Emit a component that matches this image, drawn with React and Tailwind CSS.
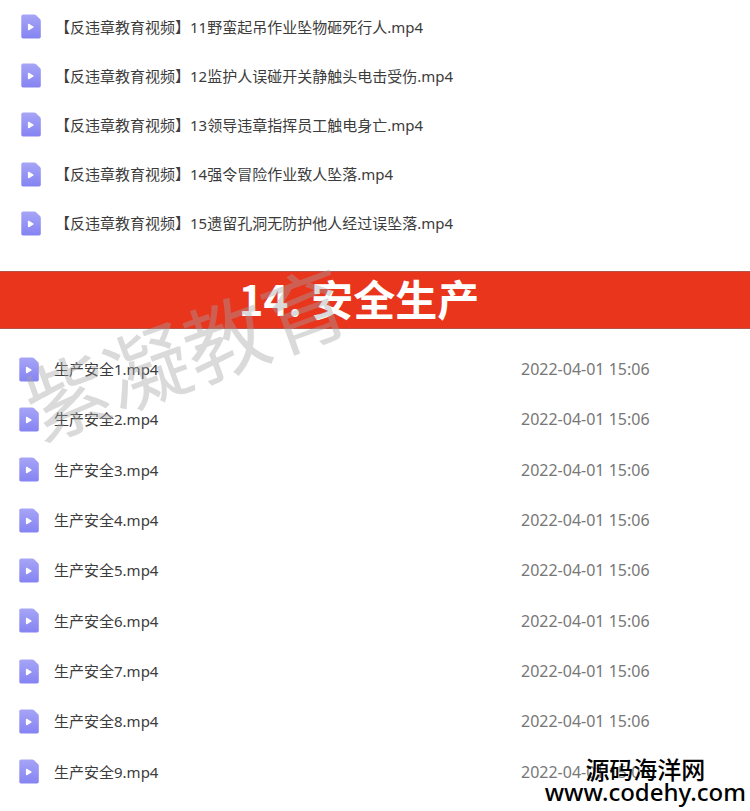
const trainingVideos = [
  '【反违章教育视频】11野蛮起吊作业坠物砸死行人.mp4',
  '【反违章教育视频】12监护人误碰开关静触头电击受伤.mp4',
  '【反违章教育视频】13领导违章指挥员工触电身亡.mp4',
  '【反违章教育视频】14强令冒险作业致人坠落.mp4',
  '【反违章教育视频】15遗留孔洞无防护他人经过误坠落.mp4',
]

const safetyVideos = [1, 2, 3, 4, 5, 6, 7, 8, 9].map((n) => ({
  name: `生产安全${n}.mp4`,
  date: '2022-04-01 15:06',
}))

// Purple file with a cut corner and a play triangle
function VideoIcon() {
  return (
    <svg
      className="h-[25px] w-5 shrink-0"
      viewBox="0 0 20 25"
      aria-hidden="true"
    >
      <defs>
        <linearGradient id="file-fill" x1="0" y1="0" x2="0" y2="1">
          <stop offset="0" stopColor="#a6a5f6" />
          <stop offset="1" stopColor="#8583f2" />
        </linearGradient>
      </defs>
      <path
        d="M2 0.5H13.2Q14.2 0.5 15 1.2L19 5Q19.8 5.8 19.8 7V22.8Q19.8 24.6 18 24.6H2Q0.3 24.6 0.3 22.8V2.3Q0.3 0.5 2 0.5Z"
        fill="url(#file-fill)"
      />
      <path
        d="M7.6 10.4V15.6L12 13Z"
        fill="#fff"
        stroke="#fff"
        strokeWidth="1.4"
        strokeLinejoin="round"
      />
    </svg>
  )
}

export default function App() {
  return (
    <main className="relative overflow-hidden bg-white pt-0.5 pb-3.5 font-['Noto_Sans','Noto_Sans_CJK_SC',sans-serif] text-[15px] leading-5 text-[#3c3c3c]">
      <ul className="grid min-h-[246px] auto-rows-fr pl-[21px]">
        {trainingVideos.map((name) => (
          <li key={name} className="flex items-center gap-3.5">
            <VideoIcon />
            <span>{name}</span>
          </li>
        ))}
      </ul>

      <h2 className="mt-[23px] border-y border-[#b5544a] bg-[#ea351d] pr-8 pb-1 text-center font-['Noto_Sans_CJK_SC',sans-serif] text-[42px] leading-[52px] font-bold text-white">
        14. 安全生产
      </h2>

      <table className="mt-[15px] h-[453px] w-full table-fixed">
        <tbody>
          {safetyVideos.map((video) => (
            <tr key={video.name}>
              <td className="py-0 pl-[19px]">
                <div className="flex items-center gap-[15px]">
                  <VideoIcon />
                  <span>{video.name}</span>
                </div>
              </td>
              <td className="w-[229px] py-0 text-base leading-5 text-[#777]">
                {video.date}
              </td>
            </tr>
          ))}
        </tbody>
      </table>

      <div className="pointer-events-none absolute top-[290px] left-[17px] -rotate-[20deg] font-['Noto_Sans_CJK_SC',sans-serif] text-[84px] leading-[120px] whitespace-nowrap text-[#a3a3a3]/40">
        紫凝教育
      </div>

      <div className="absolute right-1 bottom-2 text-center text-2xl leading-[22px] font-medium text-black">
        <p>源码海洋网</p>
        <p>www.codehy.com</p>
      </div>
    </main>
  )
}
